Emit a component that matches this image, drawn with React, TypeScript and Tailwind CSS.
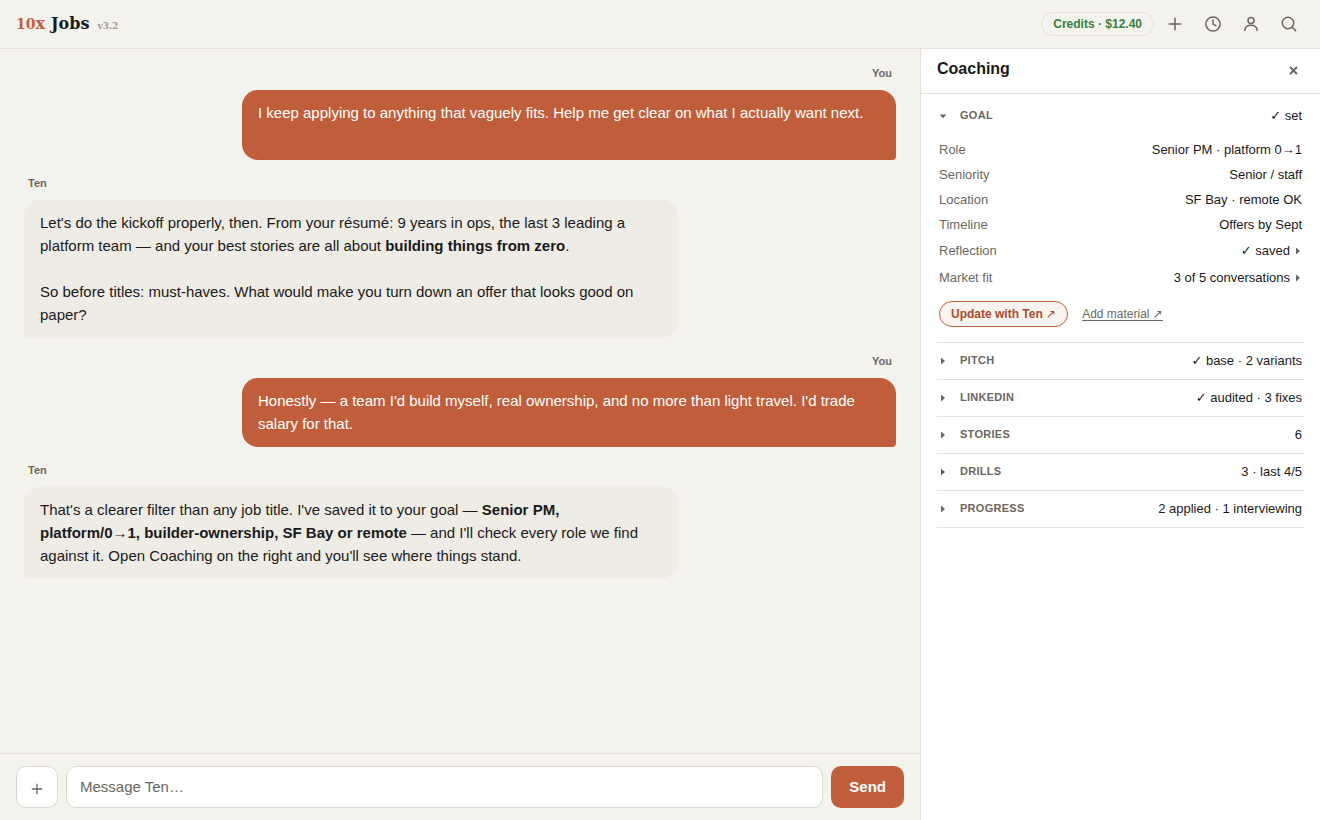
import type { ReactNode } from "react";

function Svg({ children }: { children: ReactNode }) {
  return (
    <svg width="18" height="18" viewBox="0 0 18 18" fill="none" stroke="currentColor" strokeWidth="1.5" strokeLinecap="round" strokeLinejoin="round" aria-hidden="true">
      {children}
    </svg>
  );
}

function IconButton({ label, children }: { label: string; children: ReactNode }) {
  return (
    <button type="button" aria-label={label} className="flex size-[34px] items-center justify-center rounded-lg text-[#6b675f]">
      {children}
    </button>
  );
}

function Caret({ down = false }: { down?: boolean }) {
  return (
    <svg width="8" height="8" viewBox="0 0 8 8" fill="#6b675f" aria-hidden="true" className="shrink-0">
      {down ? <path d="M0.6 2.4h6.8L4 6.2z" /> : <path d="M2 0.4v7.2L6 4z" />}
    </svg>
  );
}

function Message({ from, children }: { from: "You" | "Ten"; children: ReactNode }) {
  const mine = from === "You";
  return (
    <div className={mine ? "flex flex-col items-end" : "flex flex-col items-start"}>
      <div className="mb-[9px] px-1 text-[11px] leading-4 font-bold text-[#6b675f]">{from}</div>
      <div
        className={
          mine
            ? "w-3/4 rounded-2xl rounded-br-sm bg-[#c05e3b] px-4 pt-[11px] pb-3 text-white"
            : "w-3/4 rounded-2xl rounded-bl-sm bg-[#efece6] px-4 pt-[11px] pb-3"
        }
      >
        {children}
      </div>
    </div>
  );
}

function GoalRow({ label, children, caret = false }: { label: string; children: ReactNode; caret?: boolean }) {
  return (
    <div className={caret ? "flex h-[22px] items-center justify-between" : "flex h-5 items-center justify-between"}>
      <dt className="text-[#6b675f]">{label}</dt>
      <dd className="flex items-center">
        <span>{children}</span>
        {caret && <span className="ml-1"><Caret /></span>}
      </dd>
    </div>
  );
}

function SectionHead({ title, open = false, children }: { title: string; open?: boolean; children: ReactNode }) {
  return (
    <button type="button" aria-expanded={open} className="flex h-9 w-full items-center px-0.5 text-left">
      <Caret down={open} />
      <span className="ml-[13px] pb-0.5 text-[11px] font-bold tracking-wide text-[#6b675f] uppercase">{title}</span>
      <span className="ml-auto">{children}</span>
    </button>
  );
}

export default function App() {
  return (
    <div className="flex min-h-screen flex-col bg-[#f4f2ed] font-['Liberation_Sans','DejaVu_Sans',sans-serif] text-[#1a1a1a]">
      <header className="flex h-[49px] items-center justify-between border-b border-[#e6e1d8] pr-[14px] pl-4">
        <h1 className="flex items-baseline font-['DejaVu_Serif',serif] text-base font-bold">
          <span className="text-[#c05e3b]"><span className="text-sm">10</span>x</span>
          <span className="ml-1.5">Jobs</span>
          <span className="ml-2 text-[9px] text-[#a19d95]">v3.2</span>
        </h1>
        <div className="flex items-center gap-1">
          <button type="button" className="h-6 rounded-full border border-[#e4e0d8] px-[11px] text-xs font-bold text-[#38803f]">Credits · $12.40</button>
          <IconButton label="New chat"><Svg><path d="M9 3.2v11.6M3.2 9h11.6" /></Svg></IconButton>
          <IconButton label="History"><Svg><circle cx="9" cy="9" r="7.1" /><path d="M9 5v4.2l2.8 1.5" /></Svg></IconButton>
          <IconButton label="Profile"><Svg><circle cx="9" cy="5.6" r="3" /><path d="M2.8 15.4c.3-3.2 2.6-5.1 6.2-5.1s5.9 1.9 6.2 5.1" /></Svg></IconButton>
          <IconButton label="Search"><Svg><circle cx="8" cy="8" r="5.7" /><path d="m12.2 12.2 3.4 3.4" /></Svg></IconButton>
        </div>
      </header>

      <div className="flex flex-1">
        <main className="flex min-w-0 flex-1 flex-col">
          <div className="flex flex-1 flex-col gap-[15px] px-6 pt-4 text-[15px] leading-[23px]">
            <Message from="You">
              <p className="min-h-[47px]">I keep applying to anything that vaguely fits. Help me get clear on what I actually want next.</p>
            </Message>
            <Message from="Ten">
              <p>Let's do the kickoff properly, then. From your résumé: 9 years in ops, the last 3 leading a platform team — and your best stories are all about <strong>building things from zero</strong>.</p>
              <p className="mt-[23px]">So before titles: must-haves. What would make you turn down an offer that looks good on paper?</p>
            </Message>
            <Message from="You">
              <p>Honestly — a team I'd build myself, real ownership, and no more than light travel. I'd trade salary for that.</p>
            </Message>
            <Message from="Ten">
              <p>That's a clearer filter than any job title. I've saved it to your goal — <strong>Senior PM, <span className="whitespace-nowrap">platform/0→1,</span> builder-ownership, SF Bay or remote</strong> — and I'll check every role we find against it. Open Coaching on the right and you'll see where things stand.</p>
            </Message>
          </div>
          <form className="flex gap-2 border-t border-[#e6e1d8] px-4 py-3" onSubmit={(e) => e.preventDefault()}>
            <button type="button" aria-label="Add attachment" className="flex size-[42px] shrink-0 items-center justify-center rounded-[10px] border border-[#ddd8ce] bg-white pt-1 text-[#6b675f]">
              <svg width="12" height="12" viewBox="0 0 12 12" stroke="currentColor" strokeWidth="1.3" aria-hidden="true"><path d="M6 .8v10.4M.8 6h10.4" /></svg>
            </button>
            <input aria-label="Message Ten" placeholder="Message Ten…" className="h-[42px] min-w-0 flex-1 rounded-[10px] border border-[#ddd8ce] bg-white px-[13px] pb-0.5 text-[15px] placeholder:text-[#6b675f]" />
            <button type="submit" className="h-[42px] rounded-[10px] bg-[#c05e3b] px-[18px] text-[15px] font-bold text-white">Send</button>
          </form>
        </main>

        <aside className="w-[400px] shrink-0 border-l border-[#e6e1d8] bg-white text-[13px]">
          <div className="flex h-[45px] items-center justify-between border-b border-[#e6e1d8] pr-[22px] pb-1 pl-4">
            <h2 className="text-base font-bold">Coaching</h2>
            <button type="button" aria-label="Close" className="pt-0.5 text-[#6b675f]">
              <svg width="9" height="9" viewBox="0 0 9 9" stroke="currentColor" strokeWidth="1.8" aria-hidden="true"><path d="m1 1 7 7M8 1 1 8" /></svg>
            </button>
          </div>
          <div className="px-4 pt-1">
            <section className="border-b border-[#e6e1d8]">
              <SectionHead title="Goal" open>✓ set</SectionHead>
              <dl className="flex flex-col gap-[5px] px-0.5 pt-1.5 leading-5">
                <GoalRow label="Role">Senior PM · platform 0→1</GoalRow>
                <GoalRow label="Seniority">Senior / staff</GoalRow>
                <GoalRow label="Location">SF Bay · remote OK</GoalRow>
                <GoalRow label="Timeline">Offers by Sept</GoalRow>
                <GoalRow label="Reflection" caret>✓ saved</GoalRow>
                <GoalRow label="Market fit" caret>3 of 5 conversations</GoalRow>
              </dl>
              <div className="flex items-center gap-[14px] px-0.5 pt-3 pb-[15px] text-xs">
                <button type="button" className="h-[26px] rounded-full border border-[#c05e3b] bg-[#faf4f0] px-[11px] font-bold text-[#a94b2b]">Update with Ten <span className="font-normal">↗</span></button>
                <a href="#material" className="text-[#6b675f] underline underline-offset-2">Add material ↗</a>
              </div>
            </section>
            <section className="border-b border-[#e6e1d8]"><SectionHead title="Pitch">✓ base · 2 variants</SectionHead></section>
            <section className="border-b border-[#e6e1d8]"><SectionHead title="LinkedIn">✓ audited · 3 fixes</SectionHead></section>
            <section className="border-b border-[#e6e1d8]"><SectionHead title="Stories">6</SectionHead></section>
            <section className="border-b border-[#e6e1d8]"><SectionHead title="Drills">3 · last 4/5</SectionHead></section>
            <section className="border-b border-[#e6e1d8]"><SectionHead title="Progress">2 applied · 1 interviewing</SectionHead></section>
          </div>
        </aside>
      </div>
    </div>
  );
}
